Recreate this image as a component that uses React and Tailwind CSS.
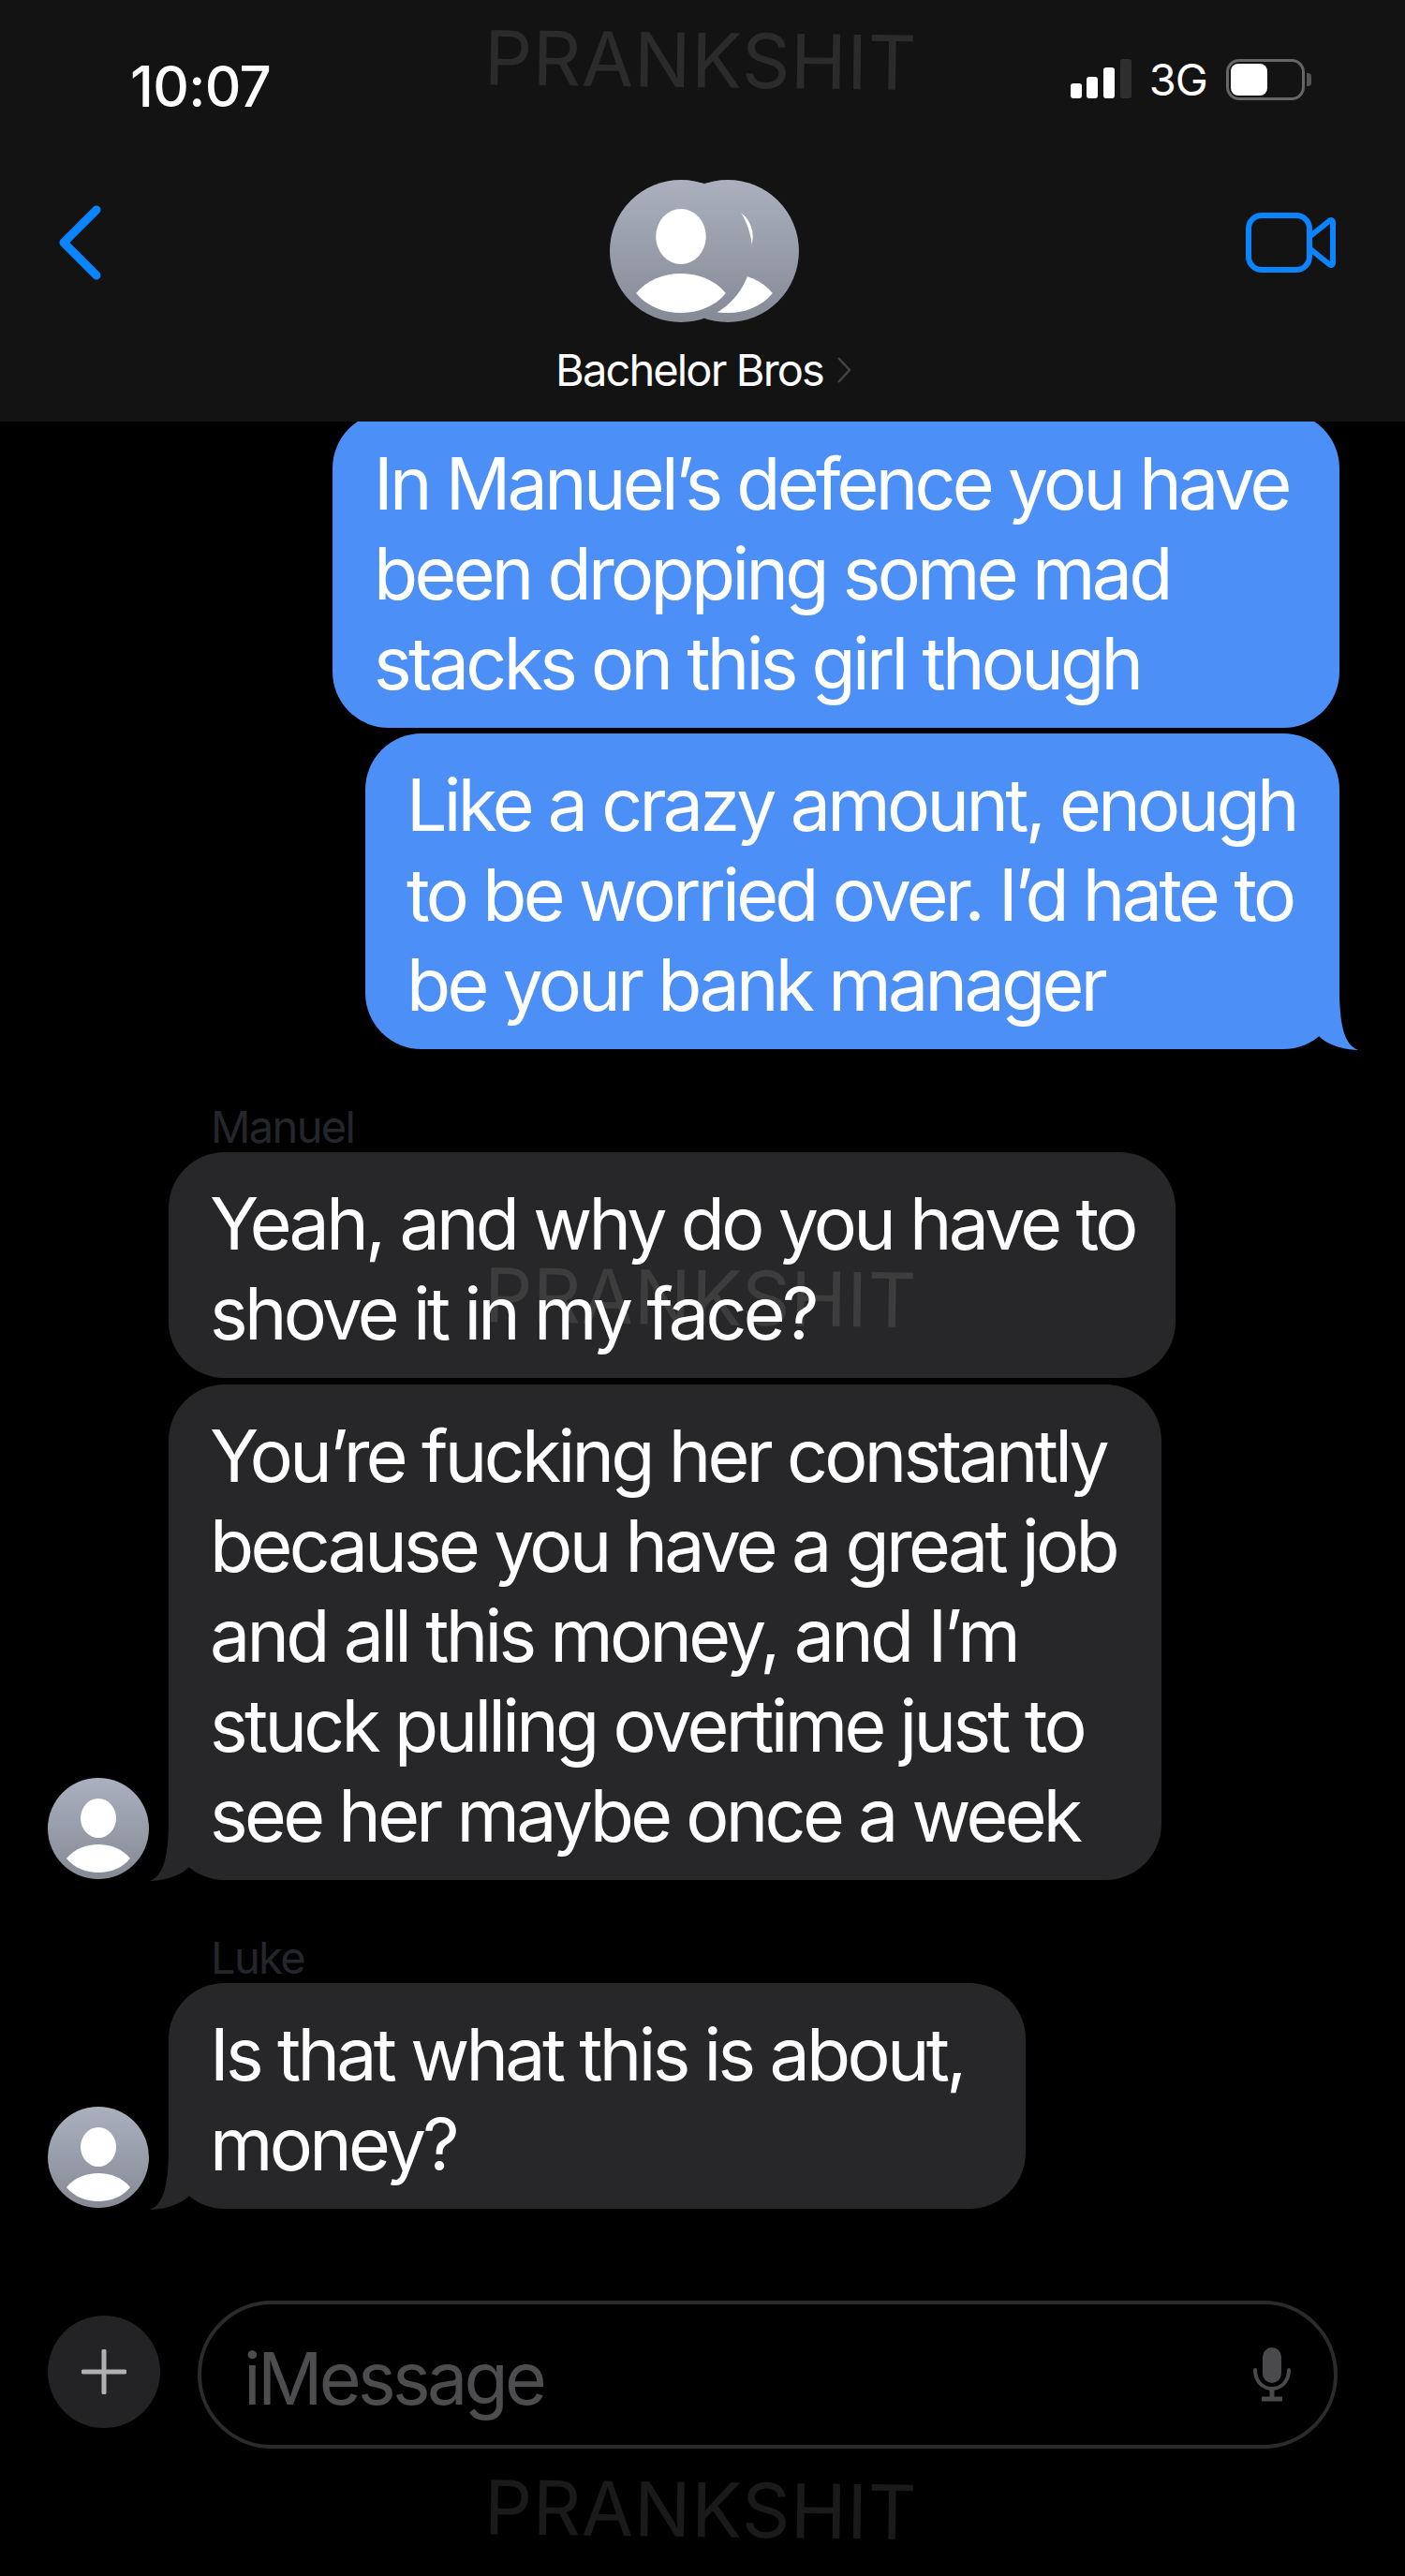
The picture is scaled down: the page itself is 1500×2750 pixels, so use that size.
const sans = "font-['Inter','Liberation_Sans',sans-serif]";

function Watermark({ className }) {
  return (
    <div
      className={`absolute left-[517px] rotate-[0.7deg] text-[80px] leading-none tracking-[0.01em] whitespace-nowrap ${className}`}
    >
      PRANKSHIT
    </div>
  );
}

function Person({ id }) {
  return (
    <>
      <defs>
        <linearGradient id={id} x1="0" y1="0" x2="0" y2="1">
          <stop offset="0" stopColor="#aab0be" />
          <stop offset="1" stopColor="#858a95" />
        </linearGradient>
      </defs>
      <circle cx="54" cy="54" r="54" fill={`url(#${id})`} />
      <ellipse cx="54" cy="43" rx="19" ry="21" fill="#fff" />
      <path d="M20 86C28 76 41 71 54 71C67 71 80 76 88 86C80 96 67 101 54 101C41 101 28 96 20 86Z" fill="#fff" />
    </>
  );
}

function SmallAvatar({ id }) {
  return (
    <svg width="108" height="108" viewBox="0 0 108 108" className="shrink-0 mb-[1px]">
      <Person id={id} />
    </svg>
  );
}

function GroupAvatar() {
  return (
    <svg width="202" height="152" viewBox="0 0 202 152">
      <g transform="translate(50 0) scale(1.407)">
        <Person id="groupBack" />
      </g>
      <g transform="scale(1.407)">
        <Person id="groupFront" />
      </g>
    </svg>
  );
}

function Tail({ side, fill }) {
  return (
    <svg
      width="72"
      height="70"
      viewBox="0 0 72 70"
      className={
        side === "right"
          ? "absolute right-[-20px] bottom-[-1px]"
          : "absolute left-[-20px] bottom-[-1px] -scale-x-100"
      }
    >
      <path d="M52 0L52 12C53 44 57 64 72 70C62 70 40 66 30 55L20 20Z" fill={fill} />
    </svg>
  );
}

function Bubble({ lines, width, blue, tail, className = "" }) {
  return (
    <div
      className={`relative rounded-[60px] pl-[44px] pt-[28px] pb-[21px] text-white text-[77px] leading-[96px] tracking-[-0.048em] whitespace-nowrap ${width} ${
        blue ? "bg-[#4c90f7]" : "bg-[#272729]"
      } ${className}`}
    >
      {lines.map((line) => (
        <div key={line} className="relative z-10">
          {line}
        </div>
      ))}
      {tail && <Tail side={blue ? "right" : "left"} fill={blue ? "#4c90f7" : "#272729"} />}
    </div>
  );
}

function SenderName({ children, className = "" }) {
  return (
    <div className={`pl-[225px] text-[#24262b] text-[47px] leading-[40px] tracking-[-0.035em] ${className}`}>
      {children}
    </div>
  );
}

export default function App() {
  return (
    <div className={`relative w-[1500px] h-[2750px] bg-black overflow-hidden ${sans}`}>
      <header className="h-[450px] bg-[#131313] flex flex-col">
        <div className="flex justify-between items-start pl-[139px] pr-[100px] pt-[62px] h-[122px]">
          <span className="text-white text-[60px] leading-[60px] font-medium tracking-[-0.012em]">10:07</span>
          <div className="flex items-center mt-[1px]">
            <svg width="66" height="44" viewBox="0 0 66 44">
              <rect x="0" y="26" width="12" height="16" rx="3" fill="#fff" />
              <rect x="17" y="19" width="12" height="23" rx="3" fill="#fff" />
              <rect x="35" y="9" width="12" height="33" rx="3" fill="#fff" />
              <rect x="53" y="0" width="12" height="42" rx="3" fill="#2e2e2e" />
            </svg>
            <span className="ml-[18px] text-white text-[47px] leading-[44px] tracking-[-0.02em]">3G</span>
            <div className="ml-[20px] flex items-center">
              <div className="w-[84px] h-[44px] rounded-[14px] border-[3px] border-[#666] p-[2px] box-border">
                <div className="w-[39px] h-full rounded-[8px] bg-white" />
              </div>
              <div className="ml-[2px] w-[5px] h-[14px] rounded-r-[4px] bg-[#555]" />
            </div>
          </div>
        </div>
        <div className="relative flex justify-between items-start pl-[62px] pr-[74px] mt-[99px]">
          <svg width="46" height="80" viewBox="0 0 46 80" className="mt-[-2px]" fill="none">
            <path d="M41 5L6 40L41 75" stroke="#0a84ff" strokeWidth="9" strokeLinecap="round" strokeLinejoin="round" />
          </svg>
          <svg width="96" height="64" viewBox="0 0 96 64" className="mt-[6px]" fill="none">
            <rect x="3" y="3" width="65" height="58" rx="14" stroke="#0a84ff" strokeWidth="6" />
            <path d="M69 25L89 9C91 7 93 8 93 11V53C93 56 91 57 89 55L69 39" stroke="#0a84ff" strokeWidth="6" strokeLinejoin="round" />
          </svg>
        </div>
        <div className="flex justify-center mt-[-107px] pl-[4px]">
          <GroupAvatar />
        </div>
        <div className="flex justify-center items-center mt-[26px] pl-[2px]">
          <span className="text-white text-[47px] leading-[50px] tracking-[-0.04em]">Bachelor Bros</span>
          <svg width="16" height="30" viewBox="0 0 16 30" className="ml-[14px]" fill="none">
            <path d="M2 2L14 15L2 28" stroke="#444" strokeWidth="2.5" />
          </svg>
        </div>
      </header>

      <main className="flex flex-col">
        <div className="h-[1960px] overflow-hidden flex flex-col">
          <div className="flex flex-col items-end pr-[70px] gap-[6px] mt-[-10px]">
            <Bubble
              blue
              width="w-[1075px]"
              lines={["In Manuel’s defence you have", "been dropping some mad", "stacks on this girl though"]}
            />
            <Bubble
              blue
              tail
              width="w-[1040px]"
              lines={["Like a crazy amount, enough", "to be worried over. I’d hate to", "be your bank manager"]}
            />
          </div>
          <SenderName className="mt-[63px]">Manuel</SenderName>
          <div className="flex flex-col items-start pl-[180px] gap-[7px] mt-[7px]">
            <Bubble width="w-[1075px]" lines={["Yeah, and why do you have to", "shove it in my face?"]} />
            <div className="flex items-end ml-[-129px] gap-[21px]">
              <SmallAvatar id="manuelAvatar" />
              <Bubble
                tail
                width="w-[1060px]"
                lines={[
                  "You’re fucking her constantly",
                  "because you have a great job",
                  "and all this money, and I’m",
                  "stuck pulling overtime just to",
                  "see her maybe once a week",
                ]}
              />
            </div>
          </div>
          <SenderName className="mt-[63px]">Luke</SenderName>
          <div className="flex items-end pl-[51px] gap-[21px] mt-[7px]">
            <SmallAvatar id="lukeAvatar" />
            <Bubble tail width="w-[915px]" lines={["Is that what this is about,", "money?"]} />
          </div>
        </div>

        <div className="flex items-center pl-[51px] pr-[72px] mt-[46px] gap-[40px]">
          <div className="w-[120px] h-[120px] mb-[6px] rounded-full bg-[#232325] flex items-center justify-center shrink-0">
            <svg width="48" height="48" viewBox="0 0 48 48" fill="none">
              <path d="M24 2V46M2 24H46" stroke="#b0b0b2" strokeWidth="5" strokeLinecap="round" />
            </svg>
          </div>
          <div className="flex-1 h-[158px] rounded-full border-[4px] border-[#2b2b2d] flex items-center justify-between pl-[45px] pr-[46px]">
            <span className="pt-[9px] text-[#4d4d50] text-[77px] leading-none tracking-[-0.048em]">iMessage</span>
            <svg width="40" height="58" viewBox="0 0 40 58" fill="none">
              <rect x="10" y="0" width="20" height="38" rx="10" fill="#4a4a4c" />
              <path d="M2 24C2 36 10 44 20 44C30 44 38 36 38 24" stroke="#4a4a4c" strokeWidth="4" strokeLinecap="round" />
              <path d="M20 44V54M9 55H31" stroke="#4a4a4c" strokeWidth="5" />
            </svg>
          </div>
        </div>
      </main>

      <Watermark className="top-[24px] text-white/10" />
      <Watermark className="top-[1345px] z-[5] text-white/10" />
      <Watermark className="top-[2639px] text-white/10" />
    </div>
  );
}
